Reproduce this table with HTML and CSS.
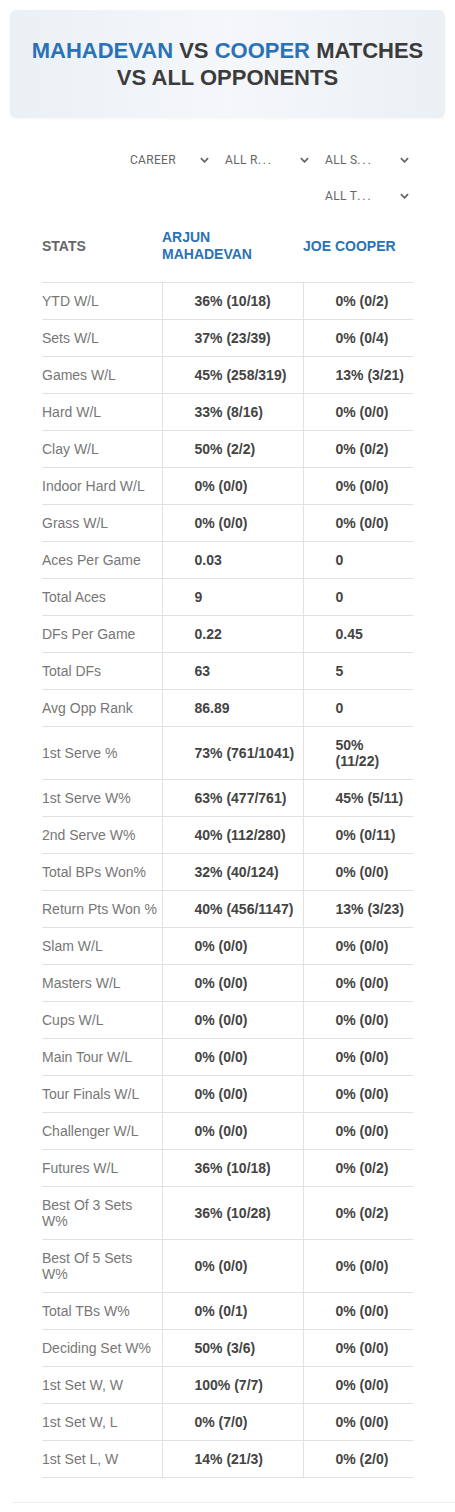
FILE: index.html
```html
<!doctype html>
<html lang="en">
  <head>
    <meta charset="UTF-8" />
    <meta name="viewport" content="width=device-width, initial-scale=1.0" />
    <title>Mahadevan vs Cooper</title>
    <link rel="stylesheet" href="styles.css">
  </head>
  <body>
    <div class="hero">
      <h1>
        <span class="blue">MAHADEVAN</span> VS <span class="blue">COOPER</span> MATCHES<br />
        VS ALL OPPONENTS
      </h1>
    </div>

    <div class="content">
      <div class="filters">
        <div class="select"><span class="select-text">CAREER</span><svg class="chev" viewBox="0 0 10 6"><path d="M1 1l4 4 4-4" /></svg></div>
        <div class="select"><span class="select-text">ALL R<span class="dots">...</span></span><svg class="chev" viewBox="0 0 10 6"><path d="M1 1l4 4 4-4" /></svg></div>
        <div class="select"><span class="select-text">ALL S<span class="dots">...</span></span><svg class="chev" viewBox="0 0 10 6"><path d="M1 1l4 4 4-4" /></svg></div>
        <div class="select"><span class="select-text">ALL T<span class="dots">...</span></span><svg class="chev" viewBox="0 0 10 6"><path d="M1 1l4 4 4-4" /></svg></div>
      </div>

      <table class="stats-table">
        <colgroup>
          <col class="col-label" />
          <col class="col-p1" />
          <col class="col-p2" />
        </colgroup>
        <thead>
          <tr>
            <th class="th-stats">STATS</th>
            <th class="th-player">ARJUN<br />MAHADEVAN</th>
            <th class="th-player">JOE COOPER</th>
          </tr>
        </thead>
        <tbody>
          <tr><td>YTD W/L</td><td>36% (10/18)</td><td>0% (0/2)</td></tr>
          <tr><td>Sets W/L</td><td>37% (23/39)</td><td>0% (0/4)</td></tr>
          <tr><td>Games W/L</td><td>45% (258/319)</td><td>13% (3/21)</td></tr>
          <tr><td>Hard W/L</td><td>33% (8/16)</td><td>0% (0/0)</td></tr>
          <tr><td>Clay W/L</td><td>50% (2/2)</td><td>0% (0/2)</td></tr>
          <tr><td>Indoor Hard W/L</td><td>0% (0/0)</td><td>0% (0/0)</td></tr>
          <tr><td>Grass W/L</td><td>0% (0/0)</td><td>0% (0/0)</td></tr>
          <tr><td>Aces Per Game</td><td>0.03</td><td>0</td></tr>
          <tr><td>Total Aces</td><td>9</td><td>0</td></tr>
          <tr><td>DFs Per Game</td><td>0.22</td><td>0.45</td></tr>
          <tr><td>Total DFs</td><td>63</td><td>5</td></tr>
          <tr><td>Avg Opp Rank</td><td>86.89</td><td>0</td></tr>
          <tr><td>1st Serve %</td><td>73% (761/1041)</td><td>50% (11/22)</td></tr>
          <tr><td>1st Serve W%</td><td>63% (477/761)</td><td>45% (5/11)</td></tr>
          <tr><td>2nd Serve W%</td><td>40% (112/280)</td><td>0% (0/11)</td></tr>
          <tr><td>Total BPs Won%</td><td>32% (40/124)</td><td>0% (0/0)</td></tr>
          <tr><td>Return Pts Won %</td><td>40% (456/1147)</td><td>13% (3/23)</td></tr>
          <tr><td>Slam W/L</td><td>0% (0/0)</td><td>0% (0/0)</td></tr>
          <tr><td>Masters W/L</td><td>0% (0/0)</td><td>0% (0/0)</td></tr>
          <tr><td>Cups W/L</td><td>0% (0/0)</td><td>0% (0/0)</td></tr>
          <tr><td>Main Tour W/L</td><td>0% (0/0)</td><td>0% (0/0)</td></tr>
          <tr><td>Tour Finals W/L</td><td>0% (0/0)</td><td>0% (0/0)</td></tr>
          <tr><td>Challenger W/L</td><td>0% (0/0)</td><td>0% (0/0)</td></tr>
          <tr><td>Futures W/L</td><td>36% (10/18)</td><td>0% (0/2)</td></tr>
          <tr><td>Best Of 3 Sets W%</td><td>36% (10/28)</td><td>0% (0/2)</td></tr>
          <tr><td>Best Of 5 Sets W%</td><td>0% (0/0)</td><td>0% (0/0)</td></tr>
          <tr><td>Total TBs W%</td><td>0% (0/1)</td><td>0% (0/0)</td></tr>
          <tr><td>Deciding Set W%</td><td>50% (3/6)</td><td>0% (0/0)</td></tr>
          <tr><td>1st Set W, W</td><td>100% (7/7)</td><td>0% (0/0)</td></tr>
          <tr><td>1st Set W, L</td><td>0% (7/0)</td><td>0% (0/0)</td></tr>
          <tr><td>1st Set L, W</td><td>14% (21/3)</td><td>0% (2/0)</td></tr>
        </tbody>
      </table>
    </div>

    <div class="footer"></div>
  </body>
</html>
```

FILE: styles.css
```css
* {
  box-sizing: border-box;
  margin: 0;
  padding: 0;
}

body {
  background-color: #fff;
  font-family: 'Liberation Sans', Arial, sans-serif;
  color: #444;
}

.hero {
  margin: 10px 10px 0;
  height: 108px;
  border-radius: 6px;
  background: linear-gradient(90deg, #ebf0f5 0%, #f5f7fa 50%, #ebf0f5 100%);
  box-shadow: 0 1px 3px rgba(0, 0, 0, 0.04);
  display: flex;
  align-items: center;
  justify-content: center;
}

.hero h1 {
  font-size: 22px;
  line-height: 27px;
  font-weight: bold;
  text-align: center;
  color: #3b3b3b;
}

.blue {
  color: #2a72b5;
}

.content {
  padding: 0 42px;
}

.filters {
  display: flex;
  flex-wrap: wrap;
  justify-content: flex-end;
  gap: 6px 4px;
  margin-top: 27px;
}

.select {
  width: 96px;
  height: 30px;
  padding: 0 4px 0 13px;
  display: flex;
  align-items: center;
  justify-content: space-between;
  font-family: Roboto, 'Liberation Sans', sans-serif;
  font-size: 12px;
  letter-spacing: 0.3px;
  color: #666;
}

.select:not(:first-child) {
  padding-left: 8px;
}

.select-text {
  white-space: nowrap;
}

.dots {
  letter-spacing: 2px;
}

.chev {
  width: 9px;
  height: 6px;
  fill: none;
  stroke: #666;
  stroke-width: 2;
}

.stats-table {
  width: 100%;
  table-layout: fixed;
  border-collapse: collapse;
}

.col-label {
  width: 120px;
}

.col-p1 {
  width: 141px;
}

.stats-table th {
  text-align: left;
  font-size: 14px;
  line-height: 17px;
  font-weight: bold;
  padding: 18px 0 19px;
  border-bottom: 1px solid #dfe2e5;
}

.th-stats {
  color: #666;
}

.th-player {
  color: #2a72b5;
}

.stats-table td {
  font-size: 14px;
  line-height: 16px;
  padding: 10px 6px 10px 32px;
  border-bottom: 1px solid #dfe2e5;
  font-weight: bold;
  color: #444;
}

.stats-table td:first-child {
  padding: 10px 4px 10px 0;
  font-weight: normal;
  color: #777;
}

.stats-table td:first-child,
.stats-table td:nth-child(2) {
  border-right: 1px solid #dfe2e5;
}

.footer {
  margin: 24px 0 0 12px;
  height: 10px;
  border-top: 1px solid #eee;
}
```
